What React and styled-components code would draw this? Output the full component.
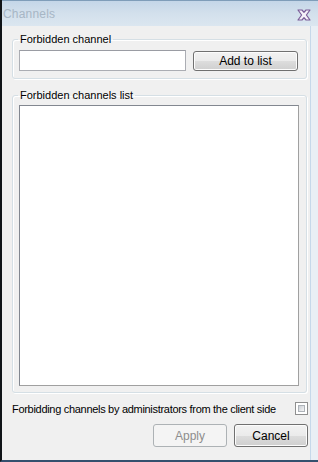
import React, { useState } from "react";
import styled, { createGlobalStyle } from "styled-components";

const GlobalStyle = createGlobalStyle`
  html, body {
    margin: 0;
    padding: 0;
    background: #f0f0f0;
  }
  body {
    font-family: "Liberation Sans", Arial, sans-serif;
    font-size: 11px;
  }
`;

const Window = styled.div`
  width: 318px;
  height: 462px;
  box-sizing: border-box;
  display: flex;
  flex-direction: column;
  background: #e9eff5;
  border-left: 2px solid #101418;
  border-bottom: 2px solid #34506e;
  overflow: hidden;
`;

const TitleBar = styled.div`
  height: 26px;
  flex-shrink: 0;
  box-sizing: border-box;
  display: flex;
  align-items: center;
  justify-content: space-between;
  padding: 1px 7px 0 1px;
  border-top: 1px solid #7f9db9;
  background: linear-gradient(to bottom, #c4d6e8 0%, #d3e0ec 50%, #dbe6f0 100%);
`;

const Title = styled.span`
  font-size: 12px;
  color: #a7b6c5;
  letter-spacing: 0.2px;
`;

const CloseGlyph = styled.svg`
  width: 14px;
  height: 12px;
  margin-top: 1px;
`;

const Body = styled.div`
  flex: 1;
  display: flex;
  flex-direction: column;
  width: 309px;
  box-sizing: border-box;
  padding: 7px 0 0 10px;
  background: #f0f0f0;
  border-right: 1px solid #c6d8ea;
`;

const Group = styled.fieldset`
  width: 295px;
  box-sizing: border-box;
  margin: ${(p) => p.$top || 0}px 0 0 0;
  padding: ${(p) => p.$pad};
  border: 1px solid #d5dfe5;
  border-radius: 3px;
  box-shadow: inset 1px 1px 0 #ffffff, 1px 1px 0 #ffffff;
  min-width: 0;
`;

const Legend = styled.legend`
  margin-left: -1px;
  padding: 0 2px;
  line-height: 13px;
  font-size: 11px;
  color: #000;
`;

const Row = styled.div`
  display: flex;
  align-items: center;
  justify-content: space-between;
`;

const TextInput = styled.input`
  width: 167px;
  height: 21px;
  box-sizing: border-box;
  margin: 0;
  border: 1px solid #abadb3;
  border-top-color: #9a9ca3;
  background: #fff;
  font: inherit;
  outline: none;
`;

const Button = styled.button`
  width: ${(p) => p.$w}px;
  height: ${(p) => p.$h}px;
  box-sizing: border-box;
  margin: 0;
  padding: 0;
  font-family: "Liberation Sans", Arial, sans-serif;
  font-size: 12px;
  color: ${(p) => (p.disabled ? "#8d8d8d" : "#000")};
  border: 1px solid ${(p) => (p.disabled ? "#adb2b5" : "#707070")};
  border-radius: 3px;
  background: ${(p) =>
    p.disabled
      ? "#f4f4f4"
      : "linear-gradient(to bottom, #f2f2f2 0%, #ebebeb 50%, #dddddd 51%, #cfcfcf 100%)"};
  box-shadow: inset 0 0 0 1px ${(p) => (p.disabled ? "#f4f4f4" : "#fcfcfc")};
`;

const ListBox = styled.div`
  height: 281px;
  box-sizing: border-box;
  background: #fff;
  border: 1px solid #828790;
  border-right-color: #a0a0a0;
  border-bottom-color: #a0a0a0;
`;

const CheckRow = styled.label`
  display: flex;
  align-items: center;
  justify-content: space-between;
  width: 296px;
  height: 13px;
  margin-top: 9px;
  font-size: 11px;
  letter-spacing: -0.3px;
  white-space: nowrap;
  color: #000;
`;

const CheckBox = styled.span`
  width: 13px;
  height: 13px;
  box-sizing: border-box;
  border: 1px solid #8f8f8f;
  background: #fff;
  padding: 2px;
  display: flex;
  &::after {
    content: "";
    flex: 1;
    background: ${(p) =>
      p.$checked ? "#4a8d2b" : "linear-gradient(135deg, #cbcfd5 0%, #f6f6f6 100%)"};
    border: 1px solid #aeb3b9;
  }
`;

const Footer = styled.div`
  display: flex;
  justify-content: flex-end;
  gap: 7px;
  width: 296px;
  margin-top: 9px;
`;

export default function App() {
  const [channel, setChannel] = useState("");
  const [checked, setChecked] = useState(false);

  return (
    <>
      <GlobalStyle />
      <Window>
        <TitleBar>
          <Title>Channels</Title>
          <CloseGlyph viewBox="0 0 14 12">
            <path
              d="M1 1 H5 L7 3.4 L9 1 H13 L9.4 6 L13 11 H9 L7 8.6 L5 11 H1 L4.6 6 Z"
              fill="#f4f0f8"
              stroke="#7a5c98"
              strokeWidth="1.2"
              strokeLinejoin="round"
            />
          </CloseGlyph>
        </TitleBar>
        <Body>
          <Group $pad="4px 8px 7px 6px">
            <Legend>Forbidden channel</Legend>
            <Row>
              <TextInput value={channel} onChange={(e) => setChannel(e.target.value)} />
              <Button $w={105} $h={20}>Add to list</Button>
            </Row>
          </Group>
          <Group $top={10} $pad="3px 7px 6px 6px">
            <Legend>Forbidden channels list</Legend>
            <ListBox />
          </Group>
          <CheckRow onClick={() => setChecked(!checked)}>
            <span>Forbidding channels by administrators from the client side</span>
            <CheckBox $checked={checked} />
          </CheckRow>
          <Footer>
            <Button $w={74} $h={23} disabled>Apply</Button>
            <Button $w={74} $h={23}>Cancel</Button>
          </Footer>
        </Body>
      </Window>
    </>
  );
}
